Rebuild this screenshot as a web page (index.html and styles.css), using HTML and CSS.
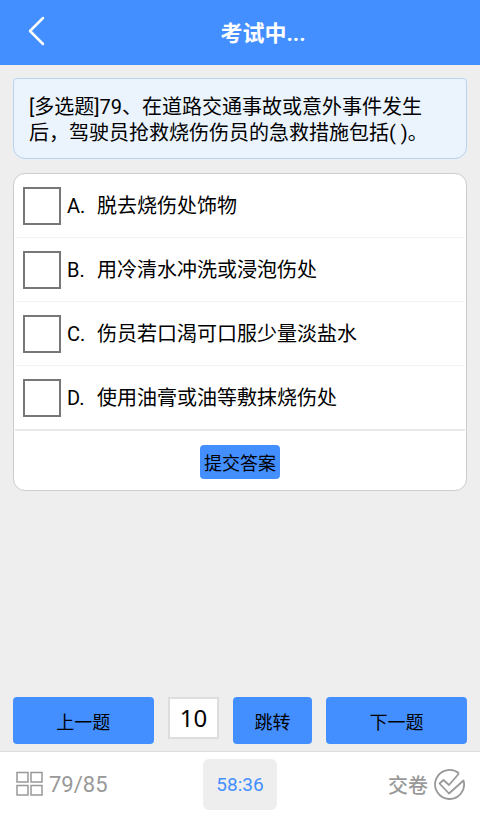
FILE: index.html
```html
<!DOCTYPE html>
<html lang="zh-CN">
<head>
    <meta charset="UTF-8">
    <meta name="viewport" content="width=device-width, initial-scale=1.0">
    <title>考试中</title>
    <link rel="stylesheet" href="styles.css">
</head>
<body>
    <header class="header">
        <button class="back" type="button" aria-label="返回">
            <svg width="18" height="30" viewBox="0 0 18 30" fill="none" stroke="#fff" stroke-width="2.5" stroke-linecap="round" stroke-linejoin="round"><path d="M16 2L3 15L16 28"/></svg>
        </button>
        <h1 class="title">考试中...</h1>
    </header>

    <main class="main">
        <p class="question">[多选题]79、在道路交通事故或意外事件发生后，驾驶员抢救烧伤伤员的急救措施包括( )。</p>

        <form class="answers">
            <label class="option"><input type="checkbox" name="answer" value="A"><span class="letter">A.</span><span>脱去烧伤处饰物</span></label>
            <label class="option"><input type="checkbox" name="answer" value="B"><span class="letter">B.</span><span>用冷清水冲洗或浸泡伤处</span></label>
            <label class="option"><input type="checkbox" name="answer" value="C"><span class="letter">C.</span><span>伤员若口渴可口服少量淡盐水</span></label>
            <label class="option"><input type="checkbox" name="answer" value="D"><span class="letter">D.</span><span>使用油膏或油等敷抹烧伤处</span></label>
            <div class="submit-row">
                <button class="submit" type="button">提交答案</button>
            </div>
        </form>
    </main>

    <div class="pager">
        <button class="btn wide" type="button">上一题</button>
        <input class="page-num" type="text" value="10" aria-label="题号">
        <button class="btn jump" type="button">跳转</button>
        <button class="btn wide" type="button">下一题</button>
    </div>

    <footer class="footer">
        <button class="progress" type="button">
            <svg width="28" height="26" viewBox="0 0 28 26" fill="none" stroke="#999" stroke-width="1.5"><path d="M2 1.500h11v9.500H2zM16 1.500h11v9.500h-11zM2 14.500h11v9.500H2zM16 14.500h11v9.500h-11z"/></svg>
            <span>79/85</span>
        </button>
        <div class="timer">58:36</div>
        <button class="finish" type="button">
            <span>交卷</span>
            <svg width="31" height="31" viewBox="0 0 31 31" fill="none" stroke="#999" stroke-width="1.8" stroke-linejoin="round"><path d="M25 4.500A14.500 14.500 0 1 0 29.500 11.500L15 24.500L5.500 14.500L9.500 11L15 16L25 4.500"/></svg>
        </button>
    </footer>
</body>
</html>
```

FILE: styles.css
```css
* {
    box-sizing: border-box;
}

body {
    margin: 0;
    min-height: 100vh;
    display: flex;
    flex-direction: column;
    background: #eee;
    color: #000;
    font-family: Roboto, "Noto Sans CJK SC", sans-serif;
    font-size: 20px;
}

button,
input {
    font-family: inherit;
    margin: 0;
}

button {
    border: 0;
    padding: 0;
    background: none;
    color: inherit;
    cursor: pointer;
}

.header {
    display: grid;
    grid-template-columns: 72px 1fr 26px;
    align-items: center;
    height: 65px;
    padding-bottom: 3px;
    background: #448fff;
    color: #fff;
}

.back {
    display: flex;
    justify-content: center;
}

.title {
    grid-column: 2;
    margin: 0;
    text-align: center;
    font-size: 22px;
    font-weight: bold;
}

.main {
    flex: 1;
    padding: 13px;
}

.question {
    margin: 0 0 14px;
    padding: 15px 15px 12px;
    border: 1px solid #b8d3ee;
    border-radius: 4px 4px 12px 12px;
    background: #ebf4fd;
    line-height: 26px;
}

.answers {
    border: 1px solid #ccc;
    border-radius: 12px;
    background: #fff;
}

.option {
    display: flex;
    align-items: center;
    height: 64px;
    margin: 0 1px;
    padding-left: 8px;
    border-bottom: 1px solid #f2f2f2;
    line-height: 26px;
}

.option:nth-child(4) {
    height: 65px;
    border-bottom: 2px solid #e8e8e8;
}

.option input {
    appearance: none;
    width: 38px;
    height: 38px;
    margin: 0 6px 0 0;
    border: 2px solid #777;
    background: #fff;
}

.option input:checked {
    background: #448fff;
}

.letter {
    width: 30px;
}

.submit-row {
    display: flex;
    justify-content: center;
    padding: 14px 0 11px;
}

.submit {
    height: 34px;
    padding: 0 4px;
    border-radius: 4px;
    background: #448fff;
    font-size: 18px;
}

.pager {
    display: flex;
    align-items: flex-start;
    justify-content: space-between;
    padding: 0 13px 7px;
}

.btn {
    height: 47px;
    border-radius: 4px;
    background: #448fff;
    font-size: 18px;
}

.wide {
    width: 31%;
}

.jump {
    width: 79px;
}

.page-num {
    width: 51px;
    height: 42px;
    padding: 0 0 2px;
    border: 2px solid #ddd;
    background: #fff;
    text-align: center;
    font-family: "Noto Sans", sans-serif;
    font-size: 24px;
}

.footer {
    display: grid;
    grid-template-columns: 1fr auto 1fr;
    align-items: center;
    height: 62px;
    padding: 6px 15px 3px;
    border-top: 1px solid #ddd;
    background: #fff;
    color: #999;
}

.progress,
.finish {
    display: flex;
    align-items: center;
    gap: 6px;
}

.progress {
    font-size: 22px;
}

.finish {
    justify-self: end;
    font-size: 20px;
    font-weight: 500;
}

.timer {
    padding: 0 13px;
    border-radius: 6px;
    background: #eee;
    color: #448fff;
    font-size: 19px;
    line-height: 51px;
}
```
